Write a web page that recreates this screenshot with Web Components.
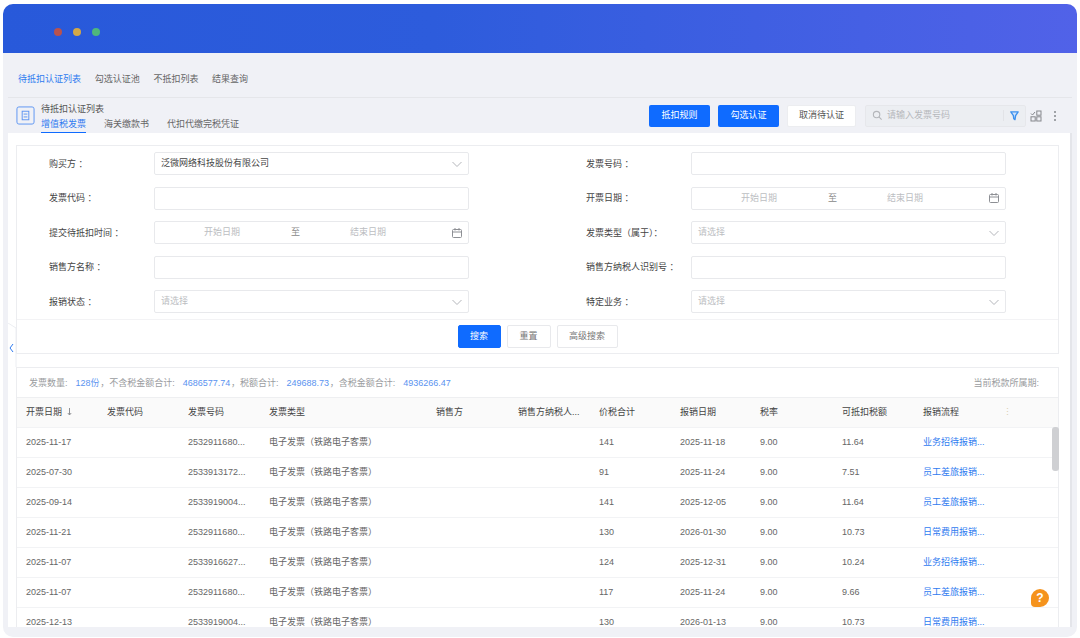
<!DOCTYPE html>
<html lang="zh">
<head>
<meta charset="utf-8">
<title>待抵扣认证列表</title>
<style>
html, body { margin: 0; background: #fff; height: 100%; overflow: hidden; }
body { font: 9px/1.4 "Liberation Sans", "Noto Sans CJK SC", sans-serif; color: #555; }
</style>
</head>
<body>
<app-window>
	<top-tabs></top-tabs>
	<list-toolbar></list-toolbar>
	<filter-panel></filter-panel>
	<invoice-table></invoice-table>
</app-window>

<script>
const icons = {
	chevron: `<svg viewBox="0 0 12 12" width="12" height="12" fill="none" stroke="#b4b6bb" stroke-width="1"><path d="M1.500 4l4.500 4.500L10.500 4"/></svg>`,
	calendar: `<svg viewBox="0 0 12 12" width="12" height="12" fill="none" stroke="#8d8f94" stroke-width="1"><rect x="1.500" y="2.500" width="9" height="8" rx="1"/><path d="M1.500 5h9M4 1v2.500M8 1v2.500"/></svg>`,
	search: `<svg viewBox="0 0 12 12" width="11" height="11" fill="none" stroke="#b4b6ba" stroke-width="1.200"><circle cx="5" cy="5" r="3.500"/><path d="M7.600 7.600L10.500 10.500"/></svg>`,
	filter: `<svg viewBox="0 0 12 12" width="11" height="11" fill="#cfe2fb" stroke="#3f92ee" stroke-width="1.500"><path d="M2 2h8L7.200 6.200 6.500 10.500 5.200 9.500 4.800 6.200z" stroke-linejoin="round"/></svg>`,
	layout: `<svg viewBox="0 0 12 12" width="12" height="12" fill="none" stroke="#85878c" stroke-width="1"><path d="M1 3.500l1.500 1.500L5 2"/><rect x="6.800" y="1" width="4.200" height="4.200"/><rect x="1" y="6.800" width="4.200" height="4.200"/><rect x="6.800" y="6.800" width="4.200" height="4.200"/></svg>`,
	dots: `<svg viewBox="0 0 4 12" width="4" height="12" fill="#85878c"><circle cx="2" cy="2" r="1"/><circle cx="2" cy="6" r="1"/><circle cx="2" cy="10" r="1"/></svg>`,
	list: `<svg viewBox="0 0 20 20" width="19" height="19" fill="none" stroke="#5b93f2" stroke-width="1"><rect x="1" y="1" width="18" height="18" rx="2"/><rect x="6.500" y="5.500" width="7" height="9"/><path d="M8 8.500h4M8 11.500h4"/></svg>`,
	sort: `<svg viewBox="0 0 5 8" width="5" height="8" fill="none" stroke="#8e9094" stroke-width="1"><path d="M2.500 0v7M0.800 5l1.700 2 1.700-2"/></svg>`
};

// each element: a template cloned into an open shadow root
function define(name, html, proto = {}) {
	const template = document.createElement("template");
	template.innerHTML = html;
	customElements.define(name, class extends HTMLElement {
		constructor() {
			super();
			this.attachShadow({mode: "open"}).appendChild(template.content.cloneNode(true));
			if(proto.init) proto.init.call(this);
		}
	});
}

define("app-window", `<style>
:host {
	display: flex;
	flex-direction: column;
	position: relative;
	margin: 4px 3px 0;
	height: 633px;
	background: #f0f1f6;
	border-radius: 10px;
	overflow: hidden;
}
.titlebar {
	flex: 0 0 49px;
	display: flex;
	align-items: center;
	gap: 11px;
	padding: 6px 0 0 51px;
	background: linear-gradient(90deg, #2859da, #2d5cdc 40%, #5162e8);
	box-sizing: border-box;
}
.dot { width: 8px; height: 8px; border-radius: 50%; }
.panel {
	flex: 1;
	min-height: 0;
	display: flex;
	flex-direction: column;
	margin: 0 5px 10px;
	overflow: hidden;
}
</style>
<div class="titlebar">
	<span class="dot" style="background:#b9524e"></span>
	<span class="dot" style="background:#d3a848"></span>
	<span class="dot" style="background:#4fb77c"></span>
</div>
<div class="panel"><slot></slot></div>`);

define("top-tabs", `<style>
:host {
	display: flex;
	align-items: center;
	gap: 13.700px;
	height: 45px;
	box-sizing: border-box;
	padding: 8px 0 0 10px;
	border-bottom: 1px solid #e5e6ea;
	color: #666;
	flex: none;
}
.active { color: #2f7bf0; }
</style>
<span class="active">待抵扣认证列表</span>
<span>勾选认证池</span>
<span>不抵扣列表</span>
<span>结果查询</span>`);

define("list-toolbar", `<style>
:host {
	display: flex;
	align-items: center;
	height: 35px;
	box-sizing: border-box;
	padding-left: 8px;
	flex: none;
}
.badge { display: flex; margin-right: 6px; }
.titles { display: flex; flex-direction: column; height: 100%; padding-top: 5px; box-sizing: border-box; }
.title { line-height: 13px; color: #555; }
.tabs { display: flex; gap: 18px; margin-top: 2px; color: #666; }
.tabs span { line-height: 13px; padding-bottom: 1px; }
.tabs .active { color: #2f7bf0; border-bottom: 1px solid #0f6bff; }
.actions { margin-left: auto; display: flex; align-items: center; padding-right: 15px; }
button {
	font: inherit;
	height: 22px;
	padding: 0;
	border: 0;
	border-radius: 2px;
	margin-right: 8px;
	background: #0f6bff;
	color: #fff;
	width: 61px;
}
button.plain { background: #fff; color: #555; width: 69px; margin-right: 9px; border: 1px solid #ecedf0; }
.search {
	display: flex;
	align-items: center;
	width: 161px;
	height: 22px;
	box-sizing: border-box;
	padding: 0 5px 0 6px;
	background: #eceef2;
	border: 1px solid #e6e7eb;
	border-radius: 2px;
	color: #b6b8bc;
	gap: 4px;
}
.search .end { margin-left: auto; display: flex; padding-left: 5px; border-left: 1px solid #e2e3e7; }
.tool { display: flex; }
.layout { margin-left: 4px; }
.dots { margin-left: 11px; }
</style>
<span class="badge">${icons.list}</span>
<div class="titles">
	<div class="title">待抵扣认证列表</div>
	<div class="tabs">
		<span class="active">增值税发票</span>
		<span>海关缴款书</span>
		<span>代扣代缴完税凭证</span>
	</div>
</div>
<div class="actions">
	<button>抵扣规则</button>
	<button>勾选认证</button>
	<button class="plain">取消待认证</button>
	<div class="search">${icons.search}<span>请输入发票号码</span><span class="end">${icons.filter}</span></div>
	<span class="tool layout">${icons.layout}</span>
	<span class="tool dots">${icons.dots}</span>
</div>`);

define("form-field", `<style>
:host { display: flex; align-items: center; color: #444; }
.label { flex: 0 0 105px; padding-top: 1px; }
.control {
	flex: 0 0 315px;
	height: 23px;
	box-sizing: border-box;
	display: flex;
	align-items: center;
	padding: 0 5px 0 6px;
	border: 1px solid #e8e9ec;
	border-radius: 2px;
	background: #fff;
	color: #444;
}
.placeholder { color: #bcbec2; }
.end { margin-left: auto; display: flex; }
.range { display: flex; align-items: center; color: #bcbec2; padding-left: 43px; }
.range b { font-weight: normal; color: #888; margin: 0 50px 0 51px; }
</style>
<span class="label"></span>
<div class="control"></div>`, {
	init() {
		this.shadowRoot.querySelector(".label").textContent = this.getAttribute("label");
		const control = this.shadowRoot.querySelector(".control");
		const kind = this.getAttribute("kind");
		const value = this.getAttribute("value");
		if(kind == "select") {
			control.innerHTML = `<span class="${value ? "" : "placeholder"}">${value || "请选择"}</span><span class="end">${icons.chevron}</span>`;
		} else if(kind == "range") {
			control.innerHTML = `<div class="range"><span>开始日期</span><b>至</b><span>结束日期</span></div><span class="end">${icons.calendar}</span>`;
		}
	}
});

define("filter-panel", `<style>
:host {
	display: block;
	position: relative;
	flex: none;
	background: #fff;
	padding: 12px 11px 13px 8px;
	border-right: 2px solid #e4e5ea;
}
.card { border: 1px solid #ecedf0; }
.grid {
	display: grid;
	grid-template-columns: 420px 420px;
	column-gap: 117px;
	row-gap: 11.500px;
	padding: 6px 0 6px 32px;
}
.foot {
	display: flex;
	justify-content: center;
	gap: 6px;
	padding: 5px 0;
	border-top: 1px solid #f3f3f5;
}
button {
	font: inherit;
	height: 23px;
	padding: 0;
	width: 44px;
	background: #fff;
	border: 1px solid #e8e9ec;
	border-radius: 2px;
	color: #777;
}
button.primary { background: #0f6bff; border-color: #0f6bff; color: #fff; width: 43px; }
button.wide { width: 61px; }
.handle { position: absolute; left: 0; top: 190px; }
</style>
<div class="card">
	<div class="grid">
		<form-field label="购买方 ：" kind="select" value="泛微网络科技股份有限公司"></form-field>
		<form-field label="发票号码 ："></form-field>
		<form-field label="发票代码 ："></form-field>
		<form-field label="开票日期 ：" kind="range"></form-field>
		<form-field label="提交待抵扣时间 ：" kind="range"></form-field>
		<form-field label="发票类型（属于）：" kind="select"></form-field>
		<form-field label="销售方名称 ："></form-field>
		<form-field label="销售方纳税人识别号 ："></form-field>
		<form-field label="报销状态 ：" kind="select"></form-field>
		<form-field label="特定业务 ：" kind="select"></form-field>
	</div>
	<div class="foot">
		<button class="primary">搜索</button>
		<button>重置</button>
		<button class="wide">高级搜索</button>
	</div>
</div>
<svg class="handle" width="9" height="52" fill="none"><path d="M0 0l8 5v42l-8 5" stroke="#eceef2" fill="#fff"/><path d="M5 21l-3 4 3 4" stroke="#2f7bf0"/></svg>`);

define("invoice-table", `<style>
:host {
	display: block;
	flex: 1;
	min-height: 0;
	background: #fff;
	padding-left: 8px;
	padding-right: 11px;
	border-right: 2px solid #e4e5ea;
	position: relative;
	overflow: hidden;
}
.card { border: 1px solid #ecedf0; border-bottom: 0; height: 100%; box-sizing: border-box; overflow: hidden; }
.summary {
	display: flex;
	align-items: center;
	padding: 1px 19px 0 12px;
	height: 28px;
	color: #9a9ca0;
	border-bottom: 1px solid #eeeff1;
}
.summary i { font-style: normal; color: #5a93f0; padding: 0 0.700px 0 8px; }
.summary .period { margin-left: auto; }
.row {
	display: grid;
	grid-template-columns: 81px 81px 81px 167px 82px 81px 81px 80px 82px 81px 80px 30px;
	height: 30px;
	align-items: center;
	padding-left: 9px;
	box-sizing: border-box;
	border-bottom: 1px solid #f2f3f5;
	color: #666;
}
.head { background: #fafafa; color: #444; }
.head .sort { display: inline-flex; vertical-align: -1px; padding-left: 5px; }
.link { color: #2f7bf0; }
.more { color: #d8cfb4; }
.thumb {
	position: absolute;
	right: 11px;
	top: 60px;
	width: 7px;
	height: 44px;
	border-radius: 3px;
	background: #cfd0d3;
}
.help {
	position: absolute;
	right: 21px;
	top: 222px;
	width: 18px;
	height: 18px;
	border-radius: 50% 50% 50% 4px;
	background: #f5931d;
	color: #fff;
	font: bold 12px/18px "Liberation Sans", sans-serif;
	text-align: center;
}
</style>
<div class="card">
	<div class="summary">
		<span>发票数量:</span><i>128份</i><span>，不含税金额合计:</span><i>4686577.74</i><span>，税额合计:</span><i>249688.73</i><span>，含税金额合计:</span><i>4936266.47</i>
		<span class="period">当前税款所属期:</span>
	</div>
	<div class="row head">
		<span>开票日期<span class="sort">${icons.sort}</span></span><span>发票代码</span><span>发票号码</span><span>发票类型</span><span>销售方</span><span>销售方纳税人...</span><span>价税合计</span><span>报销日期</span><span>税率</span><span>可抵扣税额</span><span>报销流程</span><span class="more">⋮</span>
	</div>
	<div id="body"></div>
</div>
<div class="thumb"></div>
<div class="help">?</div>`, {
	init() {
		const rows = [
			["2025-11-17", "2532911680...", "141", "2025-11-18", "11.64", "业务招待报销..."],
			["2025-07-30", "2533913172...", "91", "2025-11-24", "7.51", "员工差旅报销..."],
			["2025-09-14", "2533919004...", "141", "2025-12-05", "11.64", "员工差旅报销..."],
			["2025-11-21", "2532911680...", "130", "2026-01-30", "10.73", "日常费用报销..."],
			["2025-11-07", "2533916627...", "124", "2025-12-31", "10.24", "业务招待报销..."],
			["2025-11-07", "2532911680...", "117", "2025-11-24", "9.66", "员工差旅报销..."],
			["2025-12-13", "2533919004...", "130", "2026-01-13", "10.73", "日常费用报销..."]
		];
		this.shadowRoot.getElementById("body").innerHTML = rows.map(r => `<div class="row">
			<span>${r[0]}</span><span></span><span>${r[1]}</span><span>电子发票（铁路电子客票）</span><span></span><span></span>
			<span>${r[2]}</span><span>${r[3]}</span><span>9.00</span><span>${r[4]}</span><span class="link">${r[5]}</span><span></span>
		</div>`).join("");
	}
});
</script>
</body>
</html>
